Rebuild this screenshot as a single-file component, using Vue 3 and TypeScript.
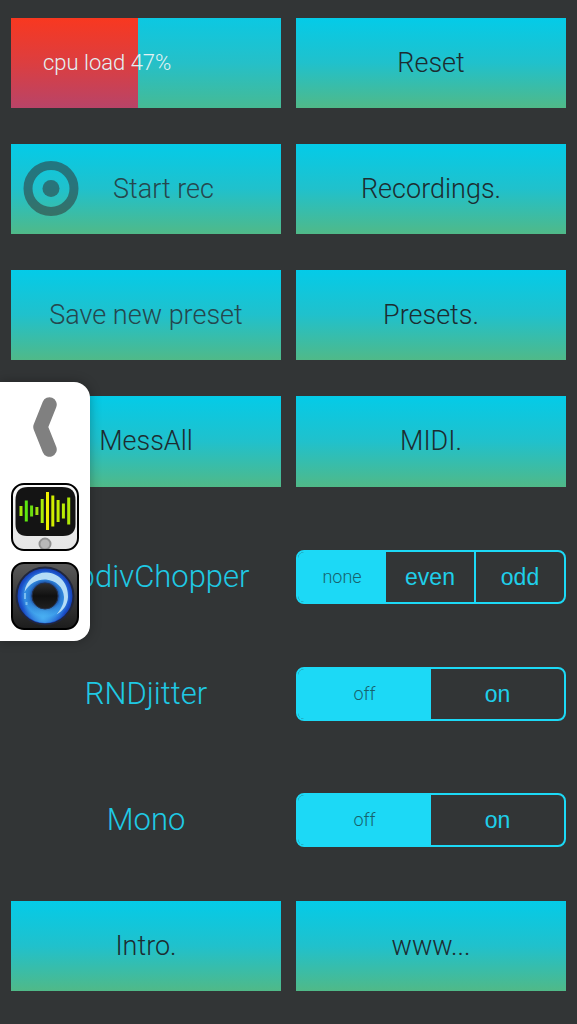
<script setup lang="ts">
import { ref } from 'vue'

interface Choice {
  id: string
  label: string
  options: string[]
}

interface Bar {
  x: number
  half: number
  color: string
}

const cpuLoad = ref(47)

const choices: Choice[] = [
  { id: 'subdiv', label: 'SubdivChopper', options: ['none', 'even', 'odd'] },
  { id: 'jitter', label: 'RNDjitter', options: ['off', 'on'] },
  { id: 'mono', label: 'Mono', options: ['off', 'on'] },
]

const selected = ref<Record<string, string>>({ subdiv: 'none', jitter: 'off', mono: 'off' })

const halves = [5, 10.5, 5.5, 4, 12, 19, 15.5, 11, 7.5, 13.5]
const colors = ['#a4e808', '#5ce810', '#6ce010', '#a0e010', '#a8ec08', '#f0f000', '#d0ec00', '#c0ec04', '#b8ec04', '#b0e808']
const bars: Bar[] = halves.map((half, i) => ({ x: 8.5 + i * 5.3, half, color: colors[i] }))
</script>

<template>
  <main class="page">
    <div class="tile meter" role="meter" aria-label="cpu load" aria-valuemin="0" aria-valuemax="100" :aria-valuenow="cpuLoad">
      <div class="meter-fill" :style="{ width: cpuLoad + '%' }"></div>
      <span class="meter-text">cpu load {{ cpuLoad }}%</span>
    </div>
    <button class="tile" type="button">Reset</button>

    <button class="tile record dim" type="button">
      <svg class="record-icon" viewBox="0 0 56 56" aria-hidden="true">
        <circle cx="28" cy="27.5" r="23" fill="none" stroke="currentColor" stroke-width="9" />
        <circle cx="28" cy="27.5" r="8.5" fill="currentColor" />
      </svg>
      Start rec
    </button>
    <button class="tile" type="button">Recordings.</button>

    <button class="tile dim" type="button">Save new preset</button>
    <button class="tile" type="button">Presets.</button>

    <button class="tile" type="button">MessAll</button>
    <button class="tile" type="button">MIDI.</button>

    <fieldset v-for="(choice, n) in choices" :key="choice.id" class="choice" :class="{ lead: n === 0 }" :aria-labelledby="choice.id + '-label'">
      <span :id="choice.id + '-label'" class="choice-label">{{ choice.label }}</span>
      <div class="segments">
        <label v-for="option in choice.options" :key="option" class="segment" :class="{ active: selected[choice.id] === option }">
          <input v-model="selected[choice.id]" class="segment-input" type="radio" :name="choice.id" :value="option" />
          <span>{{ option }}</span>
        </label>
      </div>
    </fieldset>

    <button class="tile" type="button">Intro.</button>
    <button class="tile" type="button">www...</button>

    <aside class="drawer" aria-label="Audio apps">
      <button class="drawer-button" type="button" aria-label="Close">
        <svg class="chevron" viewBox="0 0 68 60" aria-hidden="true">
          <path d="M38.5 7.5 L29.5 30 L38.5 52.5" fill="none" stroke="#808080" stroke-width="14.5" stroke-linecap="round" stroke-linejoin="round" />
        </svg>
      </button>
      <button class="drawer-button" type="button" aria-label="Audio host">
        <svg class="app-icon" viewBox="0 0 68 68" aria-hidden="true">
          <defs>
            <linearGradient id="host-case" x1="0" y1="0" x2="0" y2="1">
              <stop offset="0" stop-color="#fafafa" />
              <stop offset="0.5" stop-color="#ececec" />
              <stop offset="1" stop-color="#e6e6e6" />
            </linearGradient>
            <clipPath id="host-clip">
              <rect x="2" y="2" width="64" height="64" rx="10" />
            </clipPath>
          </defs>
          <rect x="1" y="1" width="66" height="66" rx="12" fill="url(#host-case)" stroke="#000" stroke-width="2" />
          <path d="M17 4 H51 Q64.500 4 64.500 17 V41 Q64.500 53 52 53 H16 Q4.500 53 4.500 41 V17 Q4.500 4 17 4 Z" fill="#141414" />
          <rect v-for="bar in bars" :key="bar.x" :x="bar.x" :y="28 - bar.half" width="3" :height="bar.half * 2" :fill="bar.color" />
          <g clip-path="url(#host-clip)">
            <circle cx="34" cy="61" r="5.5" fill="#b8b8b8" stroke="#929292" stroke-width="2" />
          </g>
        </svg>
      </button>
      <button class="drawer-button" type="button" aria-label="Looper">
        <svg class="app-icon" viewBox="0 0 68 68" aria-hidden="true">
          <defs>
            <linearGradient id="knob-case" x1="0" y1="0" x2="0" y2="1">
              <stop offset="0" stop-color="#5a5a5a" />
              <stop offset="1" stop-color="#1c1c1c" />
            </linearGradient>
            <radialGradient id="knob-ring" cx="34" cy="34" r="29" gradientUnits="userSpaceOnUse">
              <stop offset="0.42" stop-color="#1a3c88" />
              <stop offset="0.54" stop-color="#2878d0" />
              <stop offset="0.7" stop-color="#3490e4" />
              <stop offset="0.86" stop-color="#1c54cc" />
              <stop offset="1" stop-color="#1234a8" />
            </radialGradient>
            <radialGradient id="knob-glow" cx="32" cy="56" r="22" gradientUnits="userSpaceOnUse">
              <stop offset="0" stop-color="#4cb4f4" stop-opacity="0.9" />
              <stop offset="1" stop-color="#4cb4f4" stop-opacity="0" />
            </radialGradient>
            <linearGradient id="knob-core" x1="0" y1="0" x2="0" y2="1">
              <stop offset="0" stop-color="#2e2e2e" />
              <stop offset="0.5" stop-color="#101010" />
              <stop offset="1" stop-color="#202020" />
            </linearGradient>
          </defs>
          <rect x="1" y="1" width="66" height="66" rx="12" fill="url(#knob-case)" stroke="#000" stroke-width="2" />
          <circle cx="34" cy="34" r="28.5" fill="url(#knob-ring)" stroke="#20263c" stroke-width="2" />
          <circle cx="34" cy="34" r="27" fill="url(#knob-glow)" />
          <path d="M13.5 30 C15 18 25 10 36 10.500 C49 11.500 57.500 22 57 35 C56.500 43 52 49 45.500 52.500 C50 47 53 42 53 35 C52.500 25 45 18.500 35 17.500 C27 17 18.500 21 13.500 30 Z" fill="#b4dcf6" />
          <path d="M14 31 V37 M15.500 40 V43" fill="none" stroke="#78bcf0" stroke-width="2" />
          <circle cx="34" cy="34" r="13" fill="url(#knob-core)" stroke="#22304c" stroke-width="1" />
        </svg>
      </button>
    </aside>
  </main>
</template>

<style>
body {
  background: #323536;
}
</style>

<style scoped>
.page {
  position: relative;
  box-sizing: border-box;
  min-height: 100vh;
  padding: 18px 11px 33px;
  display: grid;
  grid-template-columns: 1fr 1fr;
  grid-template-rows: repeat(8, 1fr);
  gap: 36px 15px;
  background: #323536;
  color: #213337;
  font: 300 27px/36px Roboto, sans-serif;
}

.tile {
  display: flex;
  align-items: center;
  justify-content: center;
  min-width: 0;
  min-height: 90px;
  margin: 0;
  padding: 0;
  border: 0;
  background: linear-gradient(#04cbe8, #20c1cc 50%, #50b988);
  color: #1d2c30;
  font: inherit;
}

.dim {
  color: #26474d;
}

.meter {
  position: relative;
  justify-content: flex-start;
  background: linear-gradient(#0cc8e2, #25c0c8 50%, #46ba94);
}

.meter-fill {
  position: absolute;
  top: 0;
  bottom: 0;
  left: 0;
  background: linear-gradient(#f83820, #dc3e40 50%, #b84468);
}

.meter-text {
  position: relative;
  padding-left: 32px;
  color: #e4f2f4;
  font-size: 22px;
}

.record {
  justify-content: flex-start;
  gap: 34px;
  padding-left: 12px;
}

.record-icon {
  width: 56px;
  height: 56px;
  color: #323536;
  opacity: 0.55;
}

.choice {
  grid-column: 1 / -1;
  display: grid;
  grid-template-columns: 1fr 1fr;
  gap: 15px;
  align-items: center;
  min-width: 0;
  margin: 0;
  padding: 0;
  border: 0;
}

.lead {
  padding-top: 18px;
}

.choice-label {
  color: #1fc9e4;
  font-size: 31px;
  text-align: center;
}

.segments {
  display: flex;
  box-sizing: border-box;
  height: 54px;
  border: 2px solid #1cd9f6;
  border-radius: 8px;
  background: #323536;
  overflow: hidden;
}

.segment {
  position: relative;
  flex: 1;
  display: flex;
  align-items: center;
  justify-content: center;
  color: #1fcfea;
  font-family: "Liberation Sans", sans-serif;
  font-size: 23px;
  font-weight: 400;
}

.segment + .segment {
  border-left: 2px solid #1cd9f6;
}

.segments .active + .segment {
  border-left: 0;
}

.active {
  background: #1cd9f6;
  color: #17626c;
  font-family: Roboto, sans-serif;
  font-size: 18px;
  font-weight: 300;
}

.segment-input {
  position: absolute;
  inset: 0;
  width: 100%;
  height: 100%;
  margin: 0;
  opacity: 0;
}

.drawer {
  position: absolute;
  top: 382px;
  left: 0;
  display: flex;
  flex-direction: column;
  gap: 11px;
  padding: 15px 11px 11px;
  border-radius: 0 16px 16px 0;
  background: #fff;
  box-shadow: 0 0 12px rgba(0, 0, 0, 0.3);
}

.drawer-button {
  display: block;
  padding: 0;
  border: 0;
  background: none;
}

.chevron {
  display: block;
  width: 68px;
  height: 60px;
  margin-bottom: 15px;
}

.app-icon {
  display: block;
  width: 68px;
  height: 68px;
}
</style>
